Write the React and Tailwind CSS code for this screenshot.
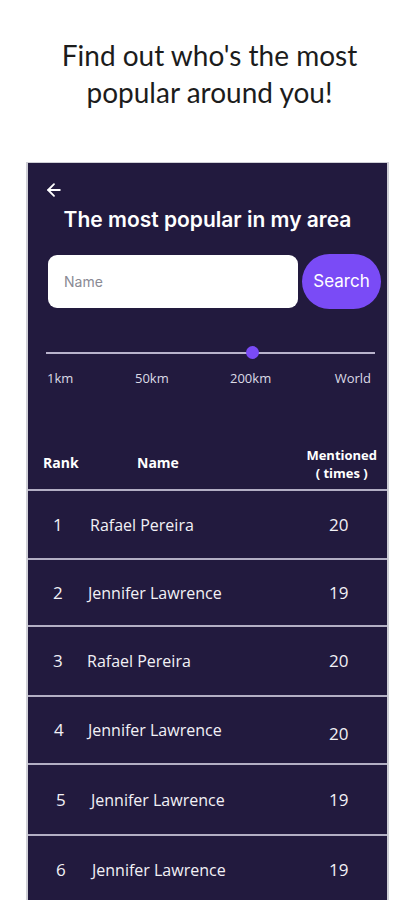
import { ArrowLeft } from 'lucide-react';

const rows = [
  { rank: 1, name: 'Rafael Pereira', count: 20, h: 'h-[69px]', rankX: 'pl-[25px] w-[62px]', countPt: '' },
  { rank: 2, name: 'Jennifer Lawrence', count: 19, h: 'h-[67px]', rankX: 'pl-[25px] w-[60px]', countPt: '' },
  { rank: 3, name: 'Rafael Pereira', count: 20, h: 'h-[70px]', rankX: 'pl-[25px] w-[59px]', countPt: '' },
  { rank: 4, name: 'Jennifer Lawrence', count: 20, h: 'h-[68px]', rankX: 'pl-[26px] w-[60px]', countPt: 'pt-[8px]' },
  { rank: 5, name: 'Jennifer Lawrence', count: 19, h: 'h-[71px]', rankX: 'pl-[28px] w-[63px]', countPt: '' },
  { rank: 6, name: 'Jennifer Lawrence', count: 19, h: 'h-[70px]', rankX: 'pl-[28px] w-[64px]', countPt: '' },
];

const RankRow = ({ row }) => (
  <div className={`flex items-center border-t-2 border-[#b3afc4] ${row.h} text-[#f2f1f6] font-['Open_Sans',sans-serif]`}>
    <span className={`${row.rankX} shrink-0 text-[17px]`}>{row.rank}</span>
    <span className="flex-1 text-[16px]">{row.name}</span>
    <span className={`w-[58px] text-[17px] ${row.countPt}`}>{row.count}</span>
  </div>
);

export default function App() {
  return (
    <div className="min-h-[900px] bg-white overflow-hidden">
      <h1 className="pt-[37px] pl-[4px] text-center text-[28px] leading-[37px] text-[#1c1c1c] font-['Lato',sans-serif] font-normal">
        Find out who's the most
        <br />
        popular around you!
      </h1>

      <div className="mx-[26px] mt-[51px] h-[760px] border-x-2 border-t border-[#cfcfd6] bg-[#221a3e]">
        <div className="pt-[17px] pl-[16px] text-white">
          <ArrowLeft size={20} strokeWidth={2.2} />
        </div>

        <h2 className="mt-[6px] text-center text-[21px] leading-[28px] font-semibold text-white font-['Inter',sans-serif]">
          The most popular in my area
        </h2>

        <div className="mt-[20px] flex items-center pl-[20px]">
          <div className="flex h-[53px] w-[250px] items-center rounded-[9px] bg-white pl-[16px] text-[14px] text-[#8a8a94] font-['Inter',sans-serif]">
            Name
          </div>
          <button className="ml-[4px] flex h-[55px] w-[79px] items-center justify-center rounded-full bg-[#7a4bf6] text-[17px] text-white font-['Inter',sans-serif]">
            Search
          </button>
        </div>

        <div className="relative ml-[18px] mr-[12px] mt-[43px] h-[2px] bg-[#b9b3cc]">
          <span className="absolute left-[200px] top-[-6px] h-[13px] w-[13px] rounded-full bg-[#7a4bf6]" />
        </div>

        <div className="mt-[16px] flex h-[18px] items-center pl-[19px] pr-[16px] text-[13px] text-[#dcdae6] font-['Open_Sans',sans-serif]">
          <span className="w-[88px]">1km</span>
          <span className="w-[95px]">50km</span>
          <span className="flex-1">200km</span>
          <span>World</span>
        </div>

        <div className="mt-[54px] flex h-[40px] items-center pl-[15px] pr-[10px] text-[14px] font-bold text-white font-['Open_Sans',sans-serif]">
          <span className="w-[94px]">Rank</span>
          <span className="flex-1">Name</span>
          <div className="flex flex-col items-center pt-[4px] text-[13px] leading-[18px]">
            <span>Mentioned</span>
            <span>( times )</span>
          </div>
        </div>

        <div className="mt-[7px]">
          {rows.map((row) => (
            <RankRow key={row.rank} row={row} />
          ))}
        </div>
      </div>
    </div>
  );
}
